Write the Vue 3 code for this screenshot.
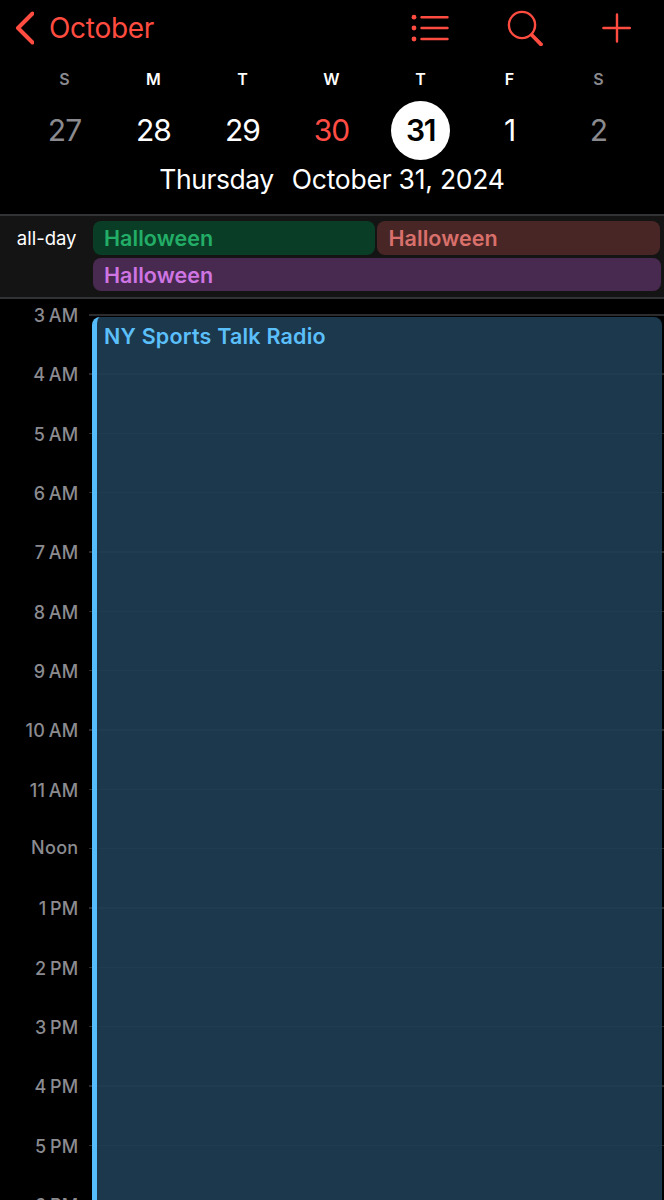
<template>
  <div class="calendar">
    <header class="header">
      <nav class="toolbar">
        <button class="back" type="button">
          <svg class="chevron" width="20" height="34" viewBox="0 0 20 34">
            <path d="M18.5 2.5 4 17l14.5 14.5" />
          </svg>
          <span class="back-label">October</span>
        </button>
        <div class="actions">
          <button type="button" aria-label="List">
            <svg width="38" height="28" viewBox="0 0 38 28">
              <path class="thin" d="M10.5 3.2H36.5M10.5 14H36.5M10.5 25H36.5" />
              <circle class="dot" cx="3" cy="3.2" r="2.4" />
              <circle class="dot" cx="3" cy="14" r="2.4" />
              <circle class="dot" cx="3" cy="25" r="2.4" />
            </svg>
          </button>
          <button type="button" aria-label="Search">
            <svg width="36" height="36" viewBox="0 0 36 36">
              <circle class="thin" cx="15" cy="15" r="13.1" />
              <path class="handle" d="M24.8 25 34 34.3" />
            </svg>
          </button>
          <button type="button" aria-label="Add">
            <svg width="30" height="30" viewBox="0 0 30 30">
              <path class="thin" d="M16 1.4V28.6M2.4 15H28.8" />
            </svg>
          </button>
        </div>
      </nav>
      <div class="week">
        <div v-for="day in days" :key="day.date" class="day" :class="day.type">
          <span class="weekday">{{ day.name }}</span>
          <span class="date">{{ day.date }}</span>
        </div>
      </div>
      <div class="full-date">
        <span class="full-weekday">Thursday</span>
        <span class="full-day">October 31, 2024</span>
      </div>
    </header>

    <section class="all-day">
      <span class="all-day-label">all-day</span>
      <div class="all-day-events">
        <div class="chip green">Halloween</div>
        <div class="chip red">Halloween</div>
        <div class="chip purple">Halloween</div>
      </div>
    </section>

    <main class="timeline">
      <div v-for="hour in hours" :key="hour" class="hour">
        <span class="hour-label" :class="{ noon: hour === 'Noon' }">{{ hour }}</span>
        <span class="hour-line"></span>
      </div>
      <div class="event">
        <span class="event-title">NY Sports Talk Radio</span>
      </div>
    </main>
  </div>
</template>

<script setup>
const days = [
  { name: 'S', date: 27, type: 'weekend' },
  { name: 'M', date: 28, type: '' },
  { name: 'T', date: 29, type: '' },
  { name: 'W', date: 30, type: 'today' },
  { name: 'T', date: 31, type: 'selected' },
  { name: 'F', date: 1, type: '' },
  { name: 'S', date: 2, type: 'weekend' }
]

// thin space between the number and AM/PM
const hours = [
  ...[3, 4, 5, 6, 7, 8, 9, 10, 11].map((h) => `${h}\u2009AM`),
  'Noon',
  ...[1, 2, 3, 4, 5, 6].map((h) => `${h}\u2009PM`)
]
</script>

<style>
body {
  background: #000;
  overflow: hidden;
}
</style>

<style scoped>
.calendar {
  display: flex;
  flex-direction: column;
  height: 1200px;
  overflow: hidden;
  background: #000;
  color: #fff;
  font-family: Inter, "Liberation Sans", sans-serif;
}

.header {
  height: 214px;
  flex: none;
}

.toolbar {
  display: flex;
  justify-content: space-between;
  height: 56px;
  padding: 0 33px 0 14px;
}

button {
  display: flex;
  align-items: center;
  padding: 0;
  border: 0;
  background: none;
  color: #ff4c40;
  font: inherit;
}

svg {
  display: block;
  fill: none;
  stroke: currentColor;
  stroke-linecap: round;
  stroke-linejoin: round;
}

.chevron {
  stroke-width: 4;
}

.thin {
  stroke-width: 2.4;
}

.dot {
  fill: currentColor;
  stroke: none;
}

.handle {
  stroke-width: 3.8;
}

.back {
  gap: 15px;
}

.back-label {
  font-size: 28px;
  letter-spacing: -0.3px;
}

.actions {
  display: flex;
  gap: 58px;
}

.week {
  display: grid;
  grid-template-columns: repeat(7, 89px);
  margin-left: 20px;
}

.day {
  display: flex;
  flex-direction: column;
  align-items: center;
}

.weekday {
  height: 45px;
  line-height: 46px;
  font-size: 16px;
  font-weight: 600;
}

.date {
  width: 59px;
  height: 59px;
  border-radius: 50%;
  line-height: 58px;
  text-align: center;
  font-size: 30px;
  letter-spacing: -1px;
}

.weekend {
  color: #8a8a8f;
}

.today .date {
  color: #ff4c44;
}

.selected .date {
  background: #fff;
  color: #000;
  font-weight: 600;
  letter-spacing: -1.4px;
}

.full-date {
  display: flex;
  justify-content: center;
  gap: 18px;
  line-height: 38px;
  font-size: 26.5px;
}

.full-weekday {
  letter-spacing: -0.45px;
}

.full-day {
  letter-spacing: -0.24px;
}

.all-day {
  display: flex;
  flex: none;
  box-sizing: border-box;
  height: 85px;
  padding: 5px 3px 0 0;
  border-top: 2px solid #323335;
  border-bottom: 2px solid #323335;
  background: #141414;
}

.all-day-label {
  width: 76.5px;
  margin-right: 16px;
  text-align: right;
  line-height: 35px;
  font-size: 18.5px;
}

.all-day-events {
  display: grid;
  flex: 1;
  grid-template-columns: 282.5px 1fr;
  grid-auto-rows: 33.5px;
  gap: 3px 2px;
  align-content: start;
}

.chip {
  padding-left: 11.5px;
  border-radius: 8px;
  line-height: 34px;
  font-size: 21.5px;
  font-weight: 600;
  letter-spacing: 0.05px;
}

.green {
  background: #0a3d25;
  color: #23ae68;
}

.red {
  margin-right: 1px;
  background: #482625;
  color: #d9706b;
}

.purple {
  grid-column: 1 / -1;
  background: #48294f;
  color: #ce75e3;
}

.timeline {
  position: relative;
  flex: 1;
  padding-top: 15px;
}

.hour {
  display: flex;
  align-items: flex-start;
  height: 59.33px;
}

.hour-label {
  width: 78.5px;
  margin: -10px 10.5px 0 0;
  text-align: right;
  line-height: 24px;
  font-size: 18px;
  font-weight: 550;
  letter-spacing: 0.3px;
  color: #8b8b90;
}

.noon {
  margin-top: -12px;
}

.hour-line {
  flex: 1;
  height: 1.5px;
  background: #2c2c2f;
}

/* event spans the visible hours and lies over the hour lines */
.event {
  position: absolute;
  top: 18px;
  right: 2px;
  bottom: -20px;
  left: 92px;
  box-sizing: border-box;
  padding-left: 7px;
  border-left: 5.5px solid #55bdfb;
  border-radius: 8px;
  background: rgba(31, 62, 83, 0.91);
}

.event-title {
  display: block;
  line-height: 38px;
  font-size: 21.5px;
  font-weight: 600;
  letter-spacing: 0.2px;
  color: #5bbffa;
}
</style>
